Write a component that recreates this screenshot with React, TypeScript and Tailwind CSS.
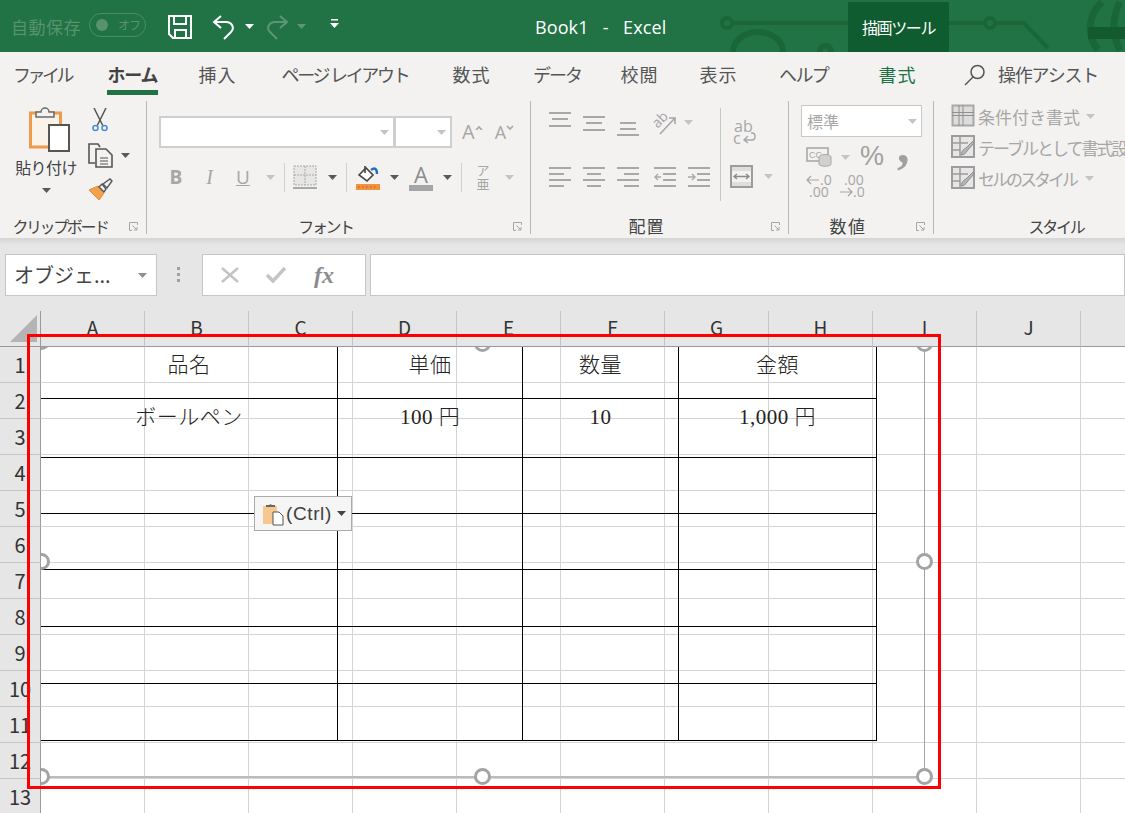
import type { ReactNode } from "react";

// ── Config ────────────────────────────────────────────────────────────────
const TABS = [
  { label: "ファイル", cls: "ml-[13px] w-[57px] tracking-[-3.5px]" },
  { label: "ホーム", cls: "ml-[37px] w-[51px] font-bold tracking-[-1.2px] border-b-[5px] border-[#217346] text-[#444]" },
  { label: "挿入", cls: "ml-[40px] w-[39px] tracking-[1px]" },
  { label: "ページ レイアウト", cls: "ml-[43px] w-[130px] tracking-[-2.3px]" },
  { label: "数式", cls: "ml-[42px] w-[39px] tracking-[1px]" },
  { label: "データ", cls: "ml-[42px] w-[47px] tracking-[-2px]" },
  { label: "校閲", cls: "ml-[40px] w-[39px] tracking-[1px]" },
  { label: "表示", cls: "ml-[40px] w-[39px] tracking-[1px]" },
  { label: "ヘルプ", cls: "ml-[41px] w-[48px] tracking-[-1.6px]" },
  { label: "書式", cls: "ml-[51px] w-[39px] tracking-[1px] text-[#217346]" },
];
const COLS = ["A", "B", "C", "D", "E", "F", "G", "H", "I", "J", ""];
const ROWS = Array.from({ length: 13 }, (_, i) => i + 1);
const TABLE_ROWS = [
  ["品名", "単価", "数量", "金額"],
  ["ボールペン", "100 円", "10", "1,000 円"],
  ["", "", "", ""],
  ["", "", "", ""],
  ["", "", "", ""],
  ["", "", "", ""],
  ["", "", "", ""],
];
const TABLE_HEIGHTS = ["h-[52px]", "h-[59px]", "h-[56px]", "h-[56px]", "h-[57px]", "h-[57px]", "h-[57px]"];
const TABLE_WIDTHS = ["w-[297px]", "w-[185px]", "w-[156px]", "w-[198px]"];
const GRAY = "#a8a8a8";

// ── Small pieces ──────────────────────────────────────────────────────────
function Caret({ color = "#595959", className = "" }: { color?: string; className?: string }) {
  return (
    <svg width="9" height="5" viewBox="0 0 9 5" className={className}>
      <polygon points="0,0 9,0 4.5,5" fill={color} />
    </svg>
  );
}

function Launcher() {
  return (
    <div className="w-[26px] flex justify-center">
      <svg width="9" height="9" viewBox="0 0 9 9" fill="none" stroke="#a6a6a6">
        <path d="M8.5 3V.5H.5v8H3" />
        <path d="M3.5 3.5l4 4M8 5v3H5" />
      </svg>
    </div>
  );
}

function GroupLabel({ text, cls = "text-[16px] tracking-[-2.4px]", launcher = true }: { text: string; cls?: string; launcher?: boolean }) {
  return (
    <div className="mt-auto h-[24px] pt-[8px] flex items-center leading-[16px] text-[#444]">
      <span className={`flex-1 text-center ${cls}`}>{text}</span>
      {launcher && <Launcher />}
    </div>
  );
}

function Slot({ className, children }: { className: string; children?: ReactNode }) {
  return <div className={`flex items-center justify-center shrink-0 ${className}`}>{children}</div>;
}

function Sep() {
  return <div className="w-px h-[29px] bg-[#d0d0d0]" />;
}

// horizontal line icons used by the alignment buttons
function Lines({ lines, h = 24 }: { lines: [number, number, number][]; h?: number }) {
  return (
    <svg width="22" height={h} viewBox={`0 0 22 ${h}`}>
      {lines.map(([x, y, w], i) => (
        <rect key={i} x={x} y={y} width={w} height="2" fill={GRAY} />
      ))}
    </svg>
  );
}

function GridIcon() {
  return (
    <svg width="24" height="24" viewBox="0 0 24 24" fill="none" stroke={GRAY}>
      <rect x="1.5" y="1.5" width="21" height="20" fill="#dcdcdc" strokeWidth="2" />
      <path d="M1 11.5h22M12 1v21M1 8.5h22M8 1v21" stroke="#8f8f8f" />
    </svg>
  );
}

function TableStyleIcon() {
  return (
    <svg width="24" height="24" viewBox="0 0 24 24" fill="none">
      <rect x="1" y="1" width="22" height="21" fill="#e6e6e6" stroke="#9c9c9c" strokeWidth="2" />
      <path d="M1 8h16M9 1v21M1 15h8" stroke="#9c9c9c" strokeWidth="1.5" />
      <path d="M10 20c1-5 3-6 5-7l7-7 1 2-7 8c-1 2-3 4-6 4z" fill="#b5b5b5" stroke="#8f8f8f" />
    </svg>
  );
}

function Handle({ className }: { className: string }) {
  return <div className={`absolute w-[17px] h-[17px] rounded-full bg-white border-[3px] border-[#a3a3a3] ${className}`} />;
}

// ── Title bar ─────────────────────────────────────────────────────────────
function TitleBar() {
  return (
    <div className="relative h-[52px] bg-[#217346] flex items-start overflow-hidden">
      <svg className="absolute left-0 top-0" width="1125" height="52" viewBox="0 0 1125 52" fill="none" stroke="#1a6639">
        <circle cx="727" cy="23" r="5" strokeWidth="4" />
        <path d="M732 23h116M949 23h36M996 23h28l24 25" strokeWidth="4" />
        <circle cx="990" cy="23" r="5" strokeWidth="4" />
        <path d="M733 52a25 20 0 0 1 50 0" strokeWidth="6" />
        <path d="M820 52a5 6 0 0 1 11 0" strokeWidth="6" />
        <path d="M1102 2c-15 14-15 34-4 48M1120 2c-8 14-8 34 0 48" strokeWidth="7" />
        <rect x="1088" y="27" width="37" height="12" fill="#145a30" stroke="none" />
      </svg>

      <span className="relative ml-[11px] mt-[16px] text-[17px] leading-[22px] tracking-[0.5px] text-[#58926f]">自動保存</span>
      <div className="relative ml-[8px] mt-[13px] w-[57px] h-[24px] rounded-full border border-[#4e8c66] flex items-center">
        <div className="ml-[6px] w-[12px] h-[12px] rounded-full bg-[#58926f]" />
        <span className="ml-[10px] text-[12px] leading-none tracking-[-1px] text-[#58926f]">オフ</span>
      </div>

      <svg className="relative ml-[22px] mt-[15px]" width="24" height="24" viewBox="0 0 24 24" fill="none" stroke="#fff" strokeWidth="2">
        <path d="M1 1h22v22H5l-4-4z" />
        <path d="M6 1v8h12V1M7 23v-8h11v8" />
      </svg>
      <svg className="relative ml-[20px] mt-[14px]" width="24" height="26" viewBox="0 0 24 26" fill="none" stroke="#fff" strokeWidth="2">
        <path d="M9 2L2 8l7 6M2 8h12c6 0 9 6 5 10l-7 7" />
      </svg>
      <Caret color="#fff" className="relative ml-[9px] mt-[24px]" />
      <svg className="relative ml-[11px] mt-[14px]" width="24" height="26" viewBox="0 0 24 26" fill="none" stroke="#5d9676" strokeWidth="2">
        <path d="M15 2l7 6-7 6M22 8H10C4 8 1 14 5 18l7 7" />
      </svg>
      <Caret color="#5d9676" className="relative ml-[8px] mt-[24px]" />
      <svg className="relative ml-[24px] mt-[19px]" width="9" height="9" viewBox="0 0 9 9" fill="#fff">
        <rect x="1" y="0" width="7" height="1.5" />
        <polygon points="0,4 9,4 4.5,9" />
      </svg>

      <span className="relative ml-[196px] mt-[15px] w-[131px] text-[18px] leading-[24px] tracking-[0.1px] whitespace-pre text-white font-['Open_Sans',sans-serif]">
        {"Book1   -   Excel"}
      </span>
      <div className="relative ml-[182px] mt-[2px] w-[101px] h-[50px] bg-[#0e5c2f] flex items-center justify-center text-[16px] tracking-[-1.4px] text-white">
        描画ツール
      </div>
    </div>
  );
}

// ── Ribbon ────────────────────────────────────────────────────────────────
function Clipboard() {
  return (
    <div className="w-[147px] shrink-0 border-r border-[#b8b8b8] flex flex-col">
      <div className="flex">
        <div className="ml-[15px] w-[62px] flex flex-col items-center">
          <svg className="ml-[7px] mt-[6px]" width="41" height="46" viewBox="0 0 41 46" fill="none">
            <rect x="1.5" y="6" width="30" height="34" fill="#faf3ea" stroke="#ee9b4a" strokeWidth="3" />
            <path d="M7 10V5h5a4 4 0 0 1 8 0h5v5z" fill="#f3f2f1" stroke="#6a6a6a" strokeWidth="1.5" />
            <rect x="20" y="18" width="20" height="26" fill="#fff" stroke="#555" strokeWidth="2" />
          </svg>
          <span className="mt-[4px] text-[16px] leading-[20px] tracking-[-0.6px] text-[#444] whitespace-nowrap">貼り付け</span>
          <Caret className="mt-[11px]" />
        </div>
        <div className="ml-[11px] flex flex-col">
          <svg className="ml-[4px] mt-[7px]" width="16" height="24" viewBox="0 0 16 24" fill="none">
            <path d="M2 0l9 18M14 0L5 18" stroke="#555" strokeWidth="1.5" />
            <circle cx="3.5" cy="20" r="2.5" stroke="#4a90d9" strokeWidth="1.6" />
            <circle cx="12.5" cy="20" r="2.5" stroke="#4a90d9" strokeWidth="1.6" />
          </svg>
          <div className="mt-[11px] flex items-center">
            <svg width="25" height="25" viewBox="0 0 25 25" fill="none" stroke="#555" strokeWidth="1.6">
              <path d="M7 20H1V1h9l2 3" />
              <path d="M8 6h10l6 6v12H8z" fill="#f3f2f1" />
              <path d="M12 15h8M12 18h8M12 21h8" strokeWidth="1" />
            </svg>
            <Caret className="ml-[8px]" />
          </div>
          <svg className="mt-[10px]" width="25" height="23" viewBox="0 0 25 23" fill="none">
            <path d="M1 12l9-4 6 7-5 7z" fill="#f0a24f" stroke="#e58a2d" />
            <path d="M11 9l3-3 4 5-2 3z" fill="#f3f2f1" stroke="#555" strokeWidth="1.4" />
            <path d="M15 6l7-5 2 2-5 7z" fill="#f3f2f1" stroke="#555" strokeWidth="1.4" />
          </svg>
        </div>
      </div>
      <GroupLabel text="クリップボード" />
    </div>
  );
}

function FontGroup() {
  return (
    <div className="w-[384px] shrink-0 border-r border-[#b8b8b8] flex flex-col">
      <div className="ml-[12px] mt-[15px] flex items-center">
        <div className="w-[236px] h-[32px] bg-white border-2 border-[#cfcfcf] flex items-center justify-end pr-[4px]">
          <Caret color="#c4c4c4" />
        </div>
        <div className="-ml-[1px] w-[58px] h-[32px] bg-white border-2 border-[#cfcfcf] flex items-center justify-end pr-[4px]">
          <Caret color="#c4c4c4" />
        </div>
        <span className="ml-[10px] text-[20px] leading-none text-[#a6a6a6] font-['Open_Sans',sans-serif]">A</span>
        <svg className="mb-[10px]" width="8" height="5" fill="none" stroke="#a6a6a6" strokeWidth="1.6"><path d="M1 5l3-3 3 3" /></svg>
        <span className="ml-[12px] text-[18px] leading-none text-[#a6a6a6] font-['Open_Sans',sans-serif]">A</span>
        <svg className="mb-[10px]" width="8" height="5" fill="none" stroke="#a6a6a6" strokeWidth="1.6"><path d="M1 1l3 3 3-3" /></svg>
      </div>
      <div className="ml-[12px] mt-[13px] h-[32px] flex items-center">
        <Slot className="w-[34px] text-[19px] font-bold text-[#a6a6a6] font-['Open_Sans',sans-serif]">B</Slot>
        <Slot className="w-[33px] text-[20px] italic text-[#a6a6a6] font-['Liberation_Serif',serif]">I</Slot>
        <Slot className="w-[34px] text-[19px] text-[#a6a6a6] underline font-['Open_Sans',sans-serif]">U</Slot>
        <Slot className="w-[20px]"><Caret color="#c4c4c4" /></Slot>
        <Slot className="w-[8px]"><Sep /></Slot>
        <Slot className="w-[34px]">
          <svg width="24" height="24" viewBox="0 0 24 24" fill="none">
            <rect x="1" y="1" width="22" height="19" fill="#e6e6e6" stroke="#a8a8a8" strokeDasharray="2 1" />
            <path d="M12 1v19M1 10h22" stroke="#a8a8a8" strokeDasharray="2 1" />
            <path d="M0 23h24" stroke="#a8a8a8" strokeWidth="2" />
          </svg>
        </Slot>
        <Slot className="w-[20px]"><Caret /></Slot>
        <Slot className="w-[8px]"><Sep /></Slot>
        <Slot className="w-[36px]">
          <svg width="24" height="26" viewBox="0 0 24 26" fill="none">
            <path d="M3 11l7-7 7 7-6 6z" fill="#fff" stroke="#444" strokeWidth="1.6" />
            <path d="M9 9V2" stroke="#444" strokeWidth="1.6" />
            <path d="M15 6c4-3 6-1 6 4" stroke="#1f6fc0" strokeWidth="2.4" />
            <rect x="0" y="20" width="24" height="6" fill="#ee9340" />
            <path d="M2 23h20" stroke="#d9381e" strokeDasharray="1.5 2.5" />
          </svg>
        </Slot>
        <Slot className="w-[16px]"><Caret /></Slot>
        <Slot className="w-[38px] flex-col">
          <span className="text-[22px] leading-[20px] text-[#8c8c8c] font-['Open_Sans',sans-serif]">A</span>
          <div className="mt-[1px] w-[24px] h-[6px] bg-[#a6a6a6]" />
        </Slot>
        <Slot className="w-[14px]"><Caret /></Slot>
        <Slot className="w-[14px]"><Sep /></Slot>
        <Slot className="w-[30px] flex-col text-[13px] leading-[14px] text-[#a6a6a6]">
          <span>ア</span>
          <span>亜</span>
        </Slot>
        <Slot className="w-[22px]"><Caret color="#c4c4c4" /></Slot>
      </div>
      <GroupLabel text="フォント" />
    </div>
  );
}

function AlignGroup() {
  return (
    <div className="w-[258px] shrink-0 border-r border-[#b8b8b8] flex flex-col">
      <div className="mt-[7px] h-[93px] flex">
        <div className="ml-[18px] w-[172px] border-r border-[#c8c8c8] flex flex-col">
          <div className="flex items-start gap-[12px]">
            <div className="mt-[4px]"><Lines h={16} lines={[[0, 0, 22], [3, 6, 16], [0, 13, 22]]} /></div>
            <div className="mt-[8px]"><Lines h={16} lines={[[0, 0, 22], [3, 6, 16], [0, 13, 22]]} /></div>
            <div className="mt-[14px]"><Lines h={16} lines={[[3, 0, 16], [3, 6, 16], [0, 12, 22]]} /></div>
            <svg className="mt-[3px]" width="30" height="26" viewBox="0 0 30 26" fill="none">
              <text x="3" y="15" transform="rotate(-45 8 12)" fontSize="14" fill="#a6a6a6" fontFamily="'Open Sans',sans-serif">ab</text>
              <path d="M9 23l15-16M18 7h6v6" stroke="#a6a6a6" strokeWidth="1.6" />
            </svg>
            <Caret color="#c4c4c4" className="-ml-[9px] mt-[12px]" />
          </div>
          <div className="mt-auto mb-[12px] flex items-center">
            <Lines lines={[[0, 2, 22], [0, 8, 15], [0, 14, 22], [0, 20, 15]]} />
            <div className="ml-[12px]"><Lines lines={[[0, 2, 22], [4, 8, 14], [0, 14, 22], [4, 20, 14]]} /></div>
            <div className="ml-[12px]"><Lines lines={[[0, 2, 22], [7, 8, 15], [0, 14, 22], [7, 20, 15]]} /></div>
            <svg className="ml-[15px]" width="22" height="24" viewBox="0 0 22 24" fill="none" stroke={GRAY} strokeWidth="2">
              <path d="M0 3h22M9 9h13M9 15h13M0 21h22" />
              <path d="M7 12H1M4 9l-3 3 3 3" strokeWidth="1.4" />
            </svg>
            <svg className="ml-[12px]" width="22" height="24" viewBox="0 0 22 24" fill="none" stroke={GRAY} strokeWidth="2">
              <path d="M0 3h22M9 9h13M9 15h13M0 21h22" />
              <path d="M0 12h6M4 9l3 3-3 3" strokeWidth="1.4" />
            </svg>
          </div>
        </div>
        <div className="ml-[9px] flex flex-col">
          <div className="ml-[3px] mt-[12px] w-[24px] text-[16px] leading-[12px] text-[#a6a6a6] font-['Open_Sans',sans-serif]">
            <div className="pl-[1px]">ab</div>
            <div className="flex items-center">
              c
              <svg className="ml-[1px]" width="14" height="12" viewBox="0 0 14 12" fill="none" stroke="#a6a6a6" strokeWidth="1.4">
                <path d="M9 1h1c4 0 4 7 0 7H2M6 4L2 8l4 3" />
              </svg>
            </div>
          </div>
          <div className="mt-auto mb-[13px] flex items-center">
            <svg width="23" height="23" viewBox="0 0 23 23" fill="none">
              <rect x="1" y="1" width="21" height="21" fill="#dedede" stroke="#9c9c9c" strokeWidth="2" />
              <rect x="2" y="6" width="19" height="11" fill="#f3f2f1" />
              <path d="M4 11.5h15M7 9l-3 2.500 3 2.500M16 9l3 2.500-3 2.500" stroke="#8c8c8c" strokeWidth="1.4" />
            </svg>
            <Caret color="#c4c4c4" className="ml-[11px]" />
          </div>
        </div>
      </div>
      <GroupLabel text="配置" cls="text-[17px] tracking-[1px]" />
    </div>
  );
}

function NumberGroup() {
  return (
    <div className="w-[145px] shrink-0 border-r border-[#b8b8b8] flex flex-col">
      <div className="ml-[12px] mt-[4px] w-[121px] h-[32px] bg-white border border-[#c8c8c8] flex items-center justify-between pl-[5px] pr-[4px] text-[16px] text-[#a6a6a6]">
        標準
        <Caret color="#c4c4c4" />
      </div>
      <div className="ml-[17px] mt-[8px] h-[24px] flex items-center">
        <svg className="shrink-0" width="26" height="20" viewBox="0 0 26 20" fill="none">
          <rect x="1" y="1" width="21" height="13" fill="#f3f2f1" stroke={GRAY} strokeWidth="1.6" />
          <text x="3" y="11" fontSize="9" fill="#a6a6a6" fontFamily="'Liberation Sans',sans-serif">CC</text>
          <ellipse cx="19" cy="10" rx="6" ry="2.500" fill="#d0d0d0" stroke={GRAY} />
          <path d="M13 10v7c0 3 12 3 12 0v-7" fill="#d0d0d0" stroke={GRAY} />
        </svg>
        <Caret color="#c4c4c4" className="ml-[9px]" />
        <span className="ml-[10px] -mt-[2px] text-[27px] leading-none text-[#a0a0a0] font-['Liberation_Sans',sans-serif]">%</span>
        <span className="ml-[13px] -mt-[24px] text-[50px] leading-none font-bold text-[#a0a0a0] font-['Liberation_Serif',serif]">,</span>
      </div>
      <div className="ml-[17px] mt-[5px] flex gap-[9px] text-[14px] leading-[12px] text-[#a6a6a6] font-['Open_Sans',sans-serif]">
        <div className="w-[24px]">
          <div className="flex items-center">
            <svg className="shrink-0" width="14" height="10" viewBox="0 0 14 10" fill="none" stroke="#a6a6a6" strokeWidth="1.2"><path d="M13 5H1M5 1L1 5l4 4" /></svg>
            <span>.0</span>
          </div>
          <div className="pl-[3px]">.00</div>
        </div>
        <div className="w-[24px]">
          <div className="pl-[5px]">.00</div>
          <div className="flex items-center">
            <svg className="shrink-0" width="14" height="10" viewBox="0 0 14 10" fill="none" stroke="#a6a6a6" strokeWidth="1.2"><path d="M1 5h12M9 1l4 4-4 4" /></svg>
            <span>.0</span>
          </div>
        </div>
      </div>
      <GroupLabel text="数値" cls="text-[17px] tracking-[1.5px]" />
    </div>
  );
}

function StyleGroup() {
  return (
    <div className="w-[244px] shrink-0 flex flex-col">
      <div className="ml-[17px] mt-[3px] flex flex-col gap-[7px] text-[#a6a6a6] whitespace-nowrap">
        <div className="flex items-center h-[24px]">
          <GridIcon />
          <span className="ml-[3px] text-[17px] leading-none">条件付き書式</span>
          <Caret color="#c4c4c4" className="ml-[6px]" />
        </div>
        <div className="flex items-center h-[24px]">
          <TableStyleIcon />
          <span className="ml-[3px] text-[17px] leading-none tracking-[-2px]">テーブルとして書式設定</span>
        </div>
        <div className="flex items-center h-[24px]">
          <TableStyleIcon />
          <span className="ml-[3px] text-[17px] leading-none tracking-[-3px]">セルのスタイル</span>
          <Caret color="#c4c4c4" className="ml-[9px]" />
        </div>
      </div>
      <GroupLabel text="スタイル" cls="text-[16px] tracking-[-2.2px]" launcher={false} />
    </div>
  );
}

// ── Sheet ─────────────────────────────────────────────────────────────────
function Sheet() {
  return (
    <div className="relative bg-[#e6e6e6]">
      {/* column headers */}
      <div className="flex h-[36px]">
        <div className="w-[41px] shrink-0 border-r border-b border-[#9a9a9a] flex items-end justify-end pr-[3px] pb-[4px]">
          <svg width="27" height="27" viewBox="0 0 27 27">
            <polygon points="27,0 27,27 0,27" fill="#b4b4b4" />
          </svg>
        </div>
        {COLS.map((c) => (
          <div key={c} className="w-[104px] shrink-0 border-r border-b border-r-[#c4c4c4] border-b-[#9a9a9a] text-center text-[19px] text-[#333]">
            <div className={`leading-[32px] overflow-hidden ${c === "J" ? "h-[36px]" : "h-[23px]"}`}>{c}</div>
          </div>
        ))}
      </div>
      {/* rows */}
      {ROWS.map((r) => (
        <div key={r} className="flex h-[36px]">
          <div className="w-[41px] shrink-0 border-r border-b border-r-[#9a9a9a] border-b-[#c4c4c4] flex items-center justify-center text-[20px] text-[#333]">
            {r}
          </div>
          {COLS.map((c) => (
            <div key={c} className="w-[104px] shrink-0 bg-white border-r border-b border-[#d4d4d4]" />
          ))}
        </div>
      ))}

      {/* pasted picture object */}
      <div className="absolute left-[41px] top-[36px] right-0 bottom-0 overflow-hidden">
        <div className="absolute left-0 top-0 w-[836px] font-['Liberation_Serif','Noto_Sans_CJK_JP',serif] font-light text-[21px] tracking-[0.5px] leading-[36px] text-[#222]">
          {TABLE_ROWS.map((row, i) => (
            <div key={i} className={`flex ${TABLE_HEIGHTS[i]}`}>
              {row.map((cell, j) => (
                <div key={j} className={`${TABLE_WIDTHS[j]} border-r border-b border-black text-center`}>
                  {cell}
                </div>
              ))}
            </div>
          ))}
        </div>
        <div className="absolute left-[883px] top-0 w-px h-[430px] bg-[#a3a3a3]" />
        <div className="absolute left-0 top-[429px] w-[883px] h-[2px] bg-[#bcbcbc]" />
        <Handle className="-left-[8px] -top-[14px]" />
        <Handle className="left-[433px] -top-[12px]" />
        <Handle className="left-[875px] -top-[12px]" />
        <Handle className="-left-[8px] top-[206px]" />
        <Handle className="left-[875px] top-[206px]" />
        <Handle className="-left-[8px] top-[421px]" />
        <Handle className="left-[433px] top-[421px]" />
        <Handle className="left-[875px] top-[421px]" />
      </div>

      {/* paste options */}
      <div className="absolute left-[254px] top-[185px] w-[98px] h-[35px] bg-[#f5f5f5] border border-[#ababab] flex items-center pl-[7px]">
        <svg className="shrink-0" width="22" height="24" viewBox="0 0 22 24" fill="none">
          <rect x="1" y="4" width="14" height="18" fill="#f6c88f" />
          <path d="M4 5V3h3a2 2 0 0 1 3 0h3v2z" fill="#666" />
          <path d="M11 10h6l4 4v9H11z" fill="#fff" stroke="#555" />
        </svg>
        <span className="ml-[2px] text-[19px] leading-none tracking-[0.6px] text-[#3f3f3f] font-['Liberation_Sans',sans-serif]">(Ctrl)</span>
        <Caret color="#444" className="ml-[5px] shrink-0" />
      </div>

      {/* red highlight */}
      <div className="absolute left-[27px] top-[23px] w-[914px] h-[455px] border-[3px] border-[#ff0000]" />
    </div>
  );
}

// ── Page ──────────────────────────────────────────────────────────────────
export default function App() {
  return (
    <div className="w-[1125px] h-[813px] overflow-hidden bg-[#e6e6e6] font-['Noto_Sans_CJK_JP','Noto_Sans',sans-serif]">
      <TitleBar />

      {/* tabs */}
      <div className="h-[46px] bg-[#f3f2f1] flex text-[18px] text-[#555]">
        {TABS.map((t) => (
          <div key={t.label} className={`h-[43px] pt-[10px] leading-[24px] text-center whitespace-nowrap ${t.cls}`}>
            {t.label}
          </div>
        ))}
        <svg className="ml-[47px] mt-[12px]" width="22" height="22" viewBox="0 0 22 22" fill="none" stroke="#555" strokeWidth="1.5">
          <circle cx="13.500" cy="8" r="6.500" />
          <path d="M9 13l-8 8" />
        </svg>
        <span className="ml-[12px] pt-[10px] w-[101px] leading-[24px] whitespace-nowrap tracking-[-1.2px]">操作アシスト</span>
      </div>

      {/* ribbon */}
      <div className="h-[140px] bg-[#f3f2f1] pt-[3px] overflow-hidden">
        <div className="h-[133px] flex">
          <Clipboard />
          <FontGroup />
          <AlignGroup />
          <NumberGroup />
          <StyleGroup />
        </div>
      </div>
      <div className="h-[7px] bg-gradient-to-b from-[#d4d4d4] to-[#e6e6e6]" />

      {/* formula bar */}
      <div className="h-[66px] pt-[9px] flex items-start">
        <div className="ml-[5px] w-[152px] h-[42px] bg-white border border-[#c6c6c6] flex items-center justify-between pl-[8px] pr-[9px] text-[20px] text-[#444] whitespace-nowrap">
          <span>オブジェ...</span>
          <Caret color="#8f8f8f" />
        </div>
        <div className="ml-[20px] mt-[13px] w-[3px] flex flex-col gap-[3px]">
          <div className="h-[3px] bg-[#a0a0a0]" />
          <div className="h-[3px] bg-[#a0a0a0]" />
          <div className="h-[3px] bg-[#a0a0a0]" />
        </div>
        <div className="ml-[22px] w-[164px] h-[42px] bg-white border border-[#c6c6c6] flex items-center">
          <svg className="ml-[18px]" width="18" height="16" viewBox="0 0 18 16" fill="none" stroke="#c4c4c4" strokeWidth="2.500">
            <path d="M1 1l16 14M17 1L1 15" />
          </svg>
          <svg className="ml-[27px]" width="20" height="16" viewBox="0 0 20 16" fill="none" stroke="#c4c4c4" strokeWidth="3.500">
            <path d="M1 8l6 6L19 1" />
          </svg>
          <span className="ml-[28px] text-[24px] italic font-bold leading-none text-[#8c8c8c] font-['Liberation_Serif',serif]">fx</span>
        </div>
        <div className="ml-[4px] flex-1 h-[42px] bg-white border border-[#c6c6c6]" />
      </div>

      <Sheet />
    </div>
  );
}
